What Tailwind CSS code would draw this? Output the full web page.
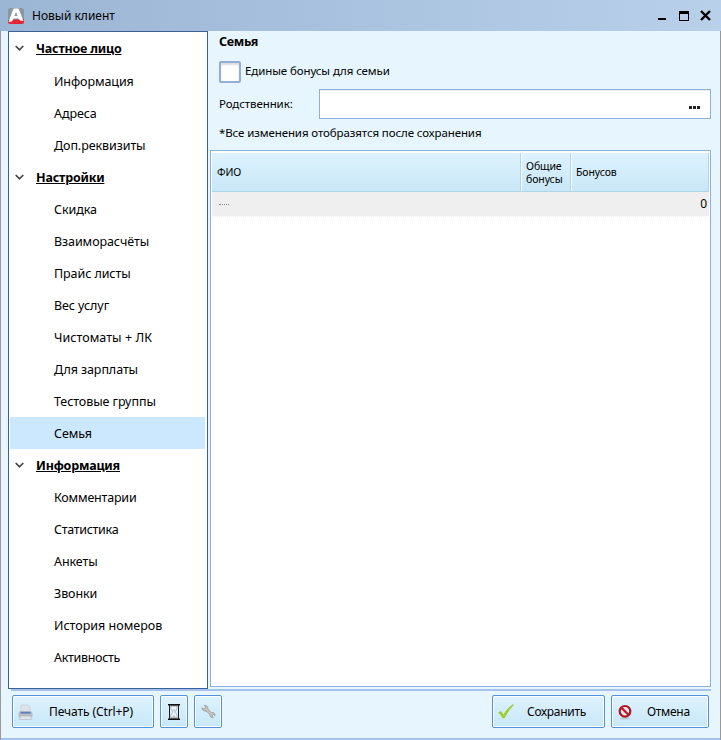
<!DOCTYPE html>
<html lang="ru">
<head>
  <meta charset="UTF-8">
  <meta name="viewport" content="width=device-width, initial-scale=1.0">
  <title>Новый клиент</title>
  <script src="https://cdn.jsdelivr.net/npm/@tailwindcss/browser@4"></script>
</head>
<body class="w-[721px] h-[740px] overflow-hidden bg-[#e7f6fe] text-black text-[12px] font-['Noto_Sans','Open_Sans',sans-serif]">
  <div class="w-full h-full flex flex-col">

    <!-- Title bar -->
    <header class="h-[31px] shrink-0 flex items-center pl-2 pr-[10px] bg-gradient-to-r from-[#9bb5d4] to-[#b8d0ea]">
      <svg class="w-4 h-4" viewBox="0 0 16 16">
        <rect width="16" height="16" rx="2.5" fill="#8b979f"/>
        <path d="M0 12L16 11V13.5Q16 16 13.5 16H2.5Q0 16 0 13.5Z" fill="#e32636"/>
        <path d="M5.5 .5H10.5L15.5 13L12 12.5L10.5 10.5H5.5L4 13.5L.5 14Z" fill="#fff"/>
        <path d="M8 4L9.6 8H6.4Z" fill="#8b979f"/>
      </svg>
      <span class="ml-2 text-[12px] leading-4">Новый клиент</span>
      <svg class="ml-auto w-[53px] h-3" viewBox="0 0 53 12" shape-rendering="crispEdges">
        <path d="M0 8H8V10H0Z"/>
        <path d="M21 1H31V11H21ZM22 4V10H30V4Z" fill-rule="evenodd"/>
        <path d="M43 1L52 10M52 1L43 10" stroke="#000" stroke-width="2.4" shape-rendering="auto"/>
      </svg>
    </header>

    <div class="grow flex flex-col border-x border-[#999] border-b-0">
      <main class="h-[658px] shrink-0 flex pl-[7px] pr-[9px]">

        <!-- Navigation tree -->
        <nav class="w-[200px] h-[658px] shrink-0 bg-white border border-[#3a6098] pt-px pl-px pr-[2px] text-[12.5px] tracking-[-0.08px]">
          <div class="h-8 flex items-center pt-px pl-[5px] font-bold tracking-[-0.2px]"><svg class="w-[9px] h-[7px] mr-3 mb-[2px]" viewBox="0 0 9 7"><path d="M.7 1L4.5 4.8L8.3 1" fill="none" stroke="#444" stroke-width="1.7"/></svg><span class="underline">Частное лицо</span></div>
          <div class="h-8 flex items-center pt-[2px] pl-11">Информация</div>
          <div class="h-8 flex items-center pt-[2px] pl-11">Адреса</div>
          <div class="h-8 flex items-center pt-[2px] pl-11">Доп.реквизиты</div>
          <div class="h-8 flex items-center pt-[2px] pl-[5px] font-bold tracking-[-0.2px]"><svg class="w-[9px] h-[7px] mr-3 mb-[2px]" viewBox="0 0 9 7"><path d="M.7 1L4.5 4.8L8.3 1" fill="none" stroke="#444" stroke-width="1.7"/></svg><span class="underline">Настройки</span></div>
          <div class="h-8 flex items-center pt-[2px] pl-11">Скидка</div>
          <div class="h-8 flex items-center pt-[2px] pl-11">Взаиморасчёты</div>
          <div class="h-8 flex items-center pt-[2px] pl-11">Прайс листы</div>
          <div class="h-8 flex items-center pt-[2px] pl-11">Вес услуг</div>
          <div class="h-8 flex items-center pt-[2px] pl-11 tracking-[0.05px]">Чистоматы + ЛК</div>
          <div class="h-8 flex items-center pt-[2px] pl-11">Для зарплаты</div>
          <div class="h-8 flex items-center pt-[2px] pl-11">Тестовые группы</div>
          <div class="h-8 flex items-center pt-[2px] pl-11 bg-[#cce8ff]">Семья</div>
          <div class="h-8 flex items-center pt-[2px] pl-[5px] font-bold tracking-[-0.2px]"><svg class="w-[9px] h-[7px] mr-3 mb-[2px]" viewBox="0 0 9 7"><path d="M.7 1L4.5 4.8L8.3 1" fill="none" stroke="#444" stroke-width="1.7"/></svg><span class="underline">Информация</span></div>
          <div class="h-8 flex items-center pt-[2px] pl-11 tracking-[-0.2px]">Комментарии</div>
          <div class="h-8 flex items-center pt-[2px] pl-11 tracking-[-0.3px]">Статистика</div>
          <div class="h-8 flex items-center pt-[2px] pl-11">Анкеты</div>
          <div class="h-8 flex items-center pt-[2px] pl-11">Звонки</div>
          <div class="h-8 flex items-center pt-[2px] pl-11 tracking-normal">История номеров</div>
          <div class="h-8 flex items-center pt-[2px] pl-11 tracking-[-0.3px]">Активность</div>
        </nav>

        <section class="ml-[2px] w-[501px] h-[656px] flex flex-col text-[11.5px] tracking-[-0.1px]">
          <h1 class="h-[30px] pl-[9px] pt-[2px] text-[12.5px] leading-[18px] font-bold tracking-[-0.3px]">Семья</h1>
          <div class="h-[28px] pl-[9px] flex items-start">
            <div class="w-[22px] h-[22px] bg-white border-2 border-[#92aedb] rounded-[2px] inset-shadow-[0_2px_2px_#ddd]"></div>
            <span class="ml-1 leading-[20px]">Единые бонусы для семьи</span>
          </div>
          <div class="h-[30px] pl-[9px] flex items-center">
            <span class="w-[100px]">Родственник:</span>
            <div class="grow h-[30px] bg-white border border-[#8fafdb] inset-shadow-[0_1px_0_#eee] flex items-end justify-end pb-[9px] pr-[10px] gap-px">
              <i class="w-[3px] h-[3px] bg-[#222]"></i><i class="w-[3px] h-[3px] bg-[#222]"></i><i class="w-[3px] h-[3px] bg-[#222]"></i>
            </div>
          </div>
          <p class="h-[31px] pl-[9px] pt-[5px] leading-[18px]">*Все изменения отобразятся после сохранения</p>

          <!-- Family table -->
          <div class="grow bg-white border border-[#8fafdb] p-px">
            <div class="h-[40px] flex text-[10.5px] leading-[13px] border-t border-t-white border-b border-b-[#afd7e7] bg-gradient-to-b from-[#def2fe] to-[#c8e7f6]">
              <div class="w-[309px] border-r border-[#afd7e7] flex items-center pt-px pl-[5px]">ФИО</div>
              <div class="w-[50px] border-r border-r-[#afd7e7] border-l border-l-white flex items-center pt-px pl-[4px]">Общие<br>бонусы</div>
              <div class="grow border-r border-r-[#afd7e7] border-l border-l-white flex items-center pt-px pl-[4px]">Бонусов</div>
            </div>
            <div class="h-[25px] bg-[#efefef] flex items-center justify-between pl-[7px] pr-[2px] border-b border-dotted border-white">
              <span class="w-[10px] mt-px border-t border-dotted border-[#888]"></span>
              <span class="text-[12px] pb-px">0</span>
            </div>
          </div>
        </section>
      </main>

      <!-- Buttons -->
      <footer class="grow flex flex-col border-b-2 border-[#a4c2ec]">
        <div class="h-[2px] ml-[10px] mr-[9px] bg-[#a4c2ec]"></div>
        <div class="mt-1 ml-[11px] mr-[11px] flex gap-[6px] text-[12px] tracking-[-0.1px]">
          <button class="w-[142px] h-[33px] rounded-[2px] border border-[#5292dc] inset-shadow-[0_0_0_1px_#fff] bg-gradient-to-b from-[#def2fe] to-[#c8e7f6] flex items-center pl-[5px]">
            <svg class="w-4 h-[18px]" viewBox="0 0 16 18">
              <path d="M3 2H10L12 4V10H3Z" fill="#dfe3e8" stroke="#c0c5cc" stroke-width=".6"/>
              <path d="M2 8H13L14 10H1Z" fill="#a9b5c8"/>
              <rect x=".5" y="9.5" width="14" height="5" rx="1" fill="#b9bec6"/>
              <rect x="2.5" y="9" width="10" height="1.6" fill="#6181b4"/>
              <path d="M2.5 13H12.5L13.5 16.5H1.5Z" fill="#dfe4e9" stroke="#b0b5bc" stroke-width=".6"/>
            </svg>
            <span class="ml-[15px]">Печать (Ctrl+P)</span>
          </button>
          <button class="w-[28px] h-[33px] rounded-[2px] border border-[#5292dc] inset-shadow-[0_0_0_1px_#fff] bg-gradient-to-b from-[#def2fe] to-[#c8e7f6] flex items-center justify-center">
            <svg class="w-3 h-4" viewBox="0 0 12 16">
              <path d="M3 1.5H9V5L7 8L9 11V14.5H3V11L5 8L3 5Z" fill="#eef4f6" stroke="#a7b8c0" stroke-width=".8"/>
              <path d="M4.5 5.5H7.5L6 7.8ZM4 13.5L6 10.5L8 13.5Z" fill="#b9c3c6"/>
              <path d="M0 .7H12M0 15.3H12" stroke="#111" stroke-width="1.4"/>
              <path d="M2.5 1.8H9.5M2.5 14.2H9.5" stroke="#444" stroke-width=".8"/>
              <path d="M1.5 1V15M10.5 1V15" stroke="#222"/>
            </svg>
          </button>
          <button class="w-[28px] h-[33px] rounded-[2px] border border-[#5292dc] inset-shadow-[0_0_0_1px_#fff] bg-gradient-to-b from-[#def2fe] to-[#c8e7f6] flex items-center justify-center">
            <svg class="w-[15px] h-[15px]" viewBox="0 0 16 16">
              <path d="M3.5 1.5L5 3.2L4.4 4.8L2.7 5.2L1 4C1 6.5 3 8 5.3 7.4L9.3 11C9.2 13.5 11 15 13 14.5L11.8 12.8L12.3 11.5L13.7 11.2L15 12.3C15.2 10 13.5 8.7 11.2 9.2L7.4 5.6C7.8 3.2 6 1 3.5 1.5Z" fill="#c6c4c1" stroke="#969492" stroke-width=".8"/>
            </svg>
          </button>
          <button class="ml-auto w-[113px] h-[33px] rounded-[2px] border border-[#5292dc] inset-shadow-[0_0_0_1px_#fff] bg-gradient-to-b from-[#def2fe] to-[#c8e7f6] flex items-center pl-[5px] tracking-[-0.3px]">
            <svg class="w-4 h-4" viewBox="0 0 16 16"><path d="M.5 8.5L3 7.5L5.5 11Q9 4.5 15 .5L15.5 1Q9.5 7 6.3 14H4.7Q3 10.5 .5 8.5Z" fill="#a2d023" stroke="#85b818" stroke-width=".4"/></svg>
            <span class="ml-[13px]">Сохранить</span>
          </button>
          <button class="w-[98px] h-[33px] rounded-[2px] border border-[#5292dc] inset-shadow-[0_0_0_1px_#fff] bg-gradient-to-b from-[#def2fe] to-[#c8e7f6] flex items-center pl-[6px] tracking-[-0.3px]">
            <svg class="w-[14px] h-4" viewBox="0 0 14 16">
              <ellipse cx="7" cy="14.5" rx="5" ry="1" fill="#b6cbd6"/>
              <circle cx="7" cy="7.3" r="5.3" fill="#e4edf3" stroke="#b41422" stroke-width="2.2"/>
              <path d="M3.3 3.6L10.7 11" stroke="#c41826" stroke-width="2.2"/>
            </svg>
            <span class="ml-[15px]">Отмена</span>
          </button>
        </div>
      </footer>
    </div>
  </div>
</body>
</html>
